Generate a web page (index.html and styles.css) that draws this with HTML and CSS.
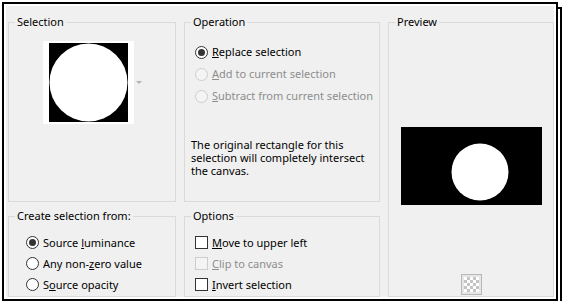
FILE: index.html
```html
<!DOCTYPE html>
<html>
<head lang="en">
    <meta charset="UTF-8">
    <title>Selection From Mask</title>
    <link rel="stylesheet" href="styles.css">
</head>
<body>
<div class="frame">
    <div class="dialog">
        <fieldset class="group sel-group">
            <legend>Selection</legend>
            <div class="thumb-row">
                <div class="thumb">
                    <svg width="79" height="79" viewBox="0 0 79 79">
                        <rect width="79" height="79" fill="#000"/>
                        <circle cx="39.5" cy="39.5" r="39" fill="#fff"/>
                    </svg>
                </div>
                <span class="drop"></span>
            </div>
        </fieldset>

        <fieldset class="group op-group">
            <legend>Operation</legend>
            <div class="choices">
                <div class="opt"><span class="radio on"></span><span><u>R</u>eplace selection</span></div>
                <div class="opt off"><span class="radio"></span><span><u>A</u>dd to current selection</span></div>
                <div class="opt off"><span class="radio"></span><span><u>S</u>ubtract from current selection</span></div>
            </div>
            <p class="note">The original rectangle for this<br>selection will completely intersect<br>the canvas.</p>
        </fieldset>

        <fieldset class="group preview-group">
            <legend>Preview</legend>
            <div class="preview-img">
                <svg width="141" height="78" viewBox="0 0 141 78">
                    <rect width="141" height="78" fill="#000"/>
                    <circle cx="79" cy="45" r="28.5" fill="#fff"/>
                </svg>
            </div>
            <div class="checker"><span></span></div>
        </fieldset>

        <fieldset class="group src-group">
            <legend>Create selection from:</legend>
            <div class="choices">
                <div class="opt"><span class="radio on"></span><span>Source <u>l</u>uminance</span></div>
                <div class="opt"><span class="radio"></span><span>Any non-<u>z</u>ero value</span></div>
                <div class="opt"><span class="radio"></span><span>S<u>o</u>urce opacity</span></div>
            </div>
        </fieldset>

        <fieldset class="group opt-group">
            <legend>Options</legend>
            <div class="choices">
                <div class="opt"><span class="check"></span><span><u>M</u>ove to upper left</span></div>
                <div class="opt off"><span class="check"></span><span><u>C</u>lip to canvas</span></div>
                <div class="opt"><span class="check"></span><span><u>I</u>nvert selection</span></div>
            </div>
        </fieldset>
    </div>
</div>
</body>
</html>
```

FILE: styles.css
```css
*{
    margin: 0;
    padding: 0;
    box-sizing: border-box;
}
body{
    background: #fff;
    font-family: "Noto Sans", sans-serif;
    font-size: 11px;
    color: #000;
}
.frame{
    position: relative;
    width: 556px;
    height: 299px;
    margin: 2px 0 0 2px;
    border: 2px solid #000;
    padding: 2px;
    background: #fff;
}
.frame:before{
    content: "";
    position: absolute;
    left: 3px;
    top: 3px;
    right: -6px;
    bottom: -6px;
    border: 2px solid #000;
    z-index: -1;
}
.dialog{
    height: 100%;
    background: #f0f0f0;
    padding: 8px 0 0 2px;
    display: grid;
    grid-template-columns: 168px 196px 166px;
    grid-template-rows: 188px 1fr;
    column-gap: 8px;
    row-gap: 6px;
}
.group{
    border: 1px solid #dadada;
    padding: 0 6px;
    min-width: 0;
}
.group legend{
    padding: 0 2px;
    line-height: 16px;
}
.preview-group{
    grid-column: 3;
    grid-row: 1 / 3;
    display: flex;
    flex-direction: column;
    align-items: center;
}
.src-group{
    grid-column: 1;
    grid-row: 2;
}
.opt-group{
    grid-column: 2;
    grid-row: 2;
}

/* selection thumbnail */
.thumb-row{
    display: flex;
    align-items: center;
    justify-content: center;
    gap: 2px;
    margin-top: 11px;
}
.thumb{
    background: #fff;
    padding: 2px 6px;
    line-height: 0;
}
.drop{
    width: 0;
    height: 0;
    border-left: 3px solid transparent;
    border-right: 3px solid transparent;
    border-top: 3px solid #b4b4b4;
}

/* radio / check rows */
.choices{
    display: flex;
    flex-direction: column;
}
.op-group .choices{
    margin: 11px 0 0 4px;
}
.src-group .choices{
    margin: 8px 0 0 11px;
}
.opt-group .choices{
    margin: 8px 0 0 4px;
}
.opt{
    display: flex;
    align-items: center;
    gap: 4px;
    height: 22px;
    line-height: 16px;
}
.src-group .opt,
.opt-group .opt{
    height: 21px;
}
.opt.off{
    color: #8d8d8d;
}
.radio{
    width: 13px;
    height: 13px;
    border: 1px solid #333;
    border-radius: 50%;
    background: #fff;
    display: flex;
    align-items: center;
    justify-content: center;
    flex: none;
}
.radio.on:after{
    content: "";
    width: 7px;
    height: 7px;
    border-radius: 50%;
    background: #333;
}
.off .radio{
    border-color: #cdcdcd;
    background: #f4f4f4;
}
.check{
    width: 13px;
    height: 13px;
    border: 1px solid #333;
    background: #fff;
    flex: none;
}
.off .check{
    border-color: #cdcdcd;
    background: #f4f4f4;
}
.note{
    margin-top: 31px;
    line-height: 13px;
}

/* preview */
.preview-img{
    margin-top: 97px;
    line-height: 0;
}
.checker{
    margin: auto 0 1px;
    width: 21px;
    height: 21px;
    border: 1px solid #b8b8b8;
    background: #e6e6e6;
    padding: 2px;
}
.checker span{
    display: block;
    width: 100%;
    height: 100%;
    background: repeating-conic-gradient(#c4c4c4 0 25%, #fff 0 50%) 0 0 / 6px 6px;
}
```
